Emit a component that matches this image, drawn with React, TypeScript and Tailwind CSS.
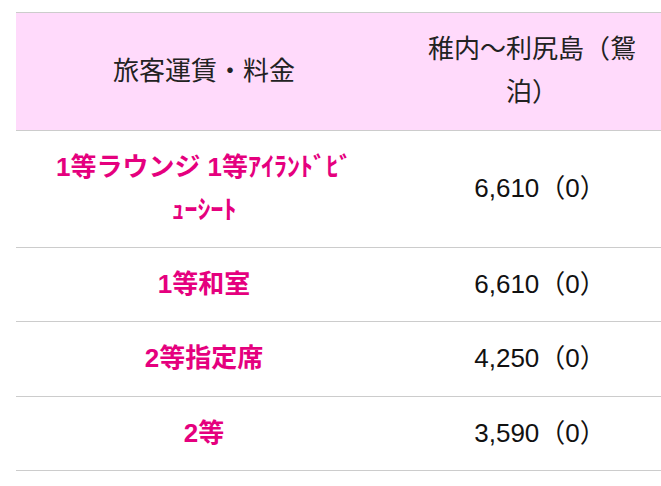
import React from "react";

const rows = [
  { name: "1等ラウンジ 1等ｱｲﾗﾝﾄﾞﾋﾞｭｰｼｰﾄ", price: "6,610（0）" },
  { name: "1等和室", price: "6,610（0）" },
  { name: "2等指定席", price: "4,250（0）" },
  { name: "2等", price: "3,590（0）" },
];

export default function App() {
  return (
    <div
      className="w-[661px] h-[486px] overflow-hidden bg-white pt-[12px] pl-[16px]"
      style={{ fontFamily: '"Liberation Sans", "Noto Sans CJK JP", sans-serif' }}
    >
      <table className="table-fixed border-collapse w-[656px] text-[26px] leading-[43.3px]">
        <colgroup>
          <col className="w-[376px]" />
          <col className="w-[280px]" />
        </colgroup>
        <thead>
          <tr className="bg-[#ffdafb] border-t border-b border-[#cccccc]">
            <th className="font-normal text-[#222222] text-center align-middle px-[34px] py-[15px]">
              旅客運賃・料金
            </th>
            <th className="font-normal text-[#222222] text-center align-middle px-[24px] py-[15px]">
              稚内〜利尻島（鴛泊）
            </th>
          </tr>
        </thead>
        <tbody>
          {rows.map((r) => (
            <tr key={r.name + r.price} className="border-b border-[#cccccc]">
              <td className="font-bold text-[#e5007e] text-center align-middle px-[34px] py-[15px]">
                {r.name}
              </td>
              <td className="text-[#111111] text-center align-middle pl-[32px] pr-[16px] py-[15px]">
                {r.price}
              </td>
            </tr>
          ))}
        </tbody>
      </table>
    </div>
  );
}
